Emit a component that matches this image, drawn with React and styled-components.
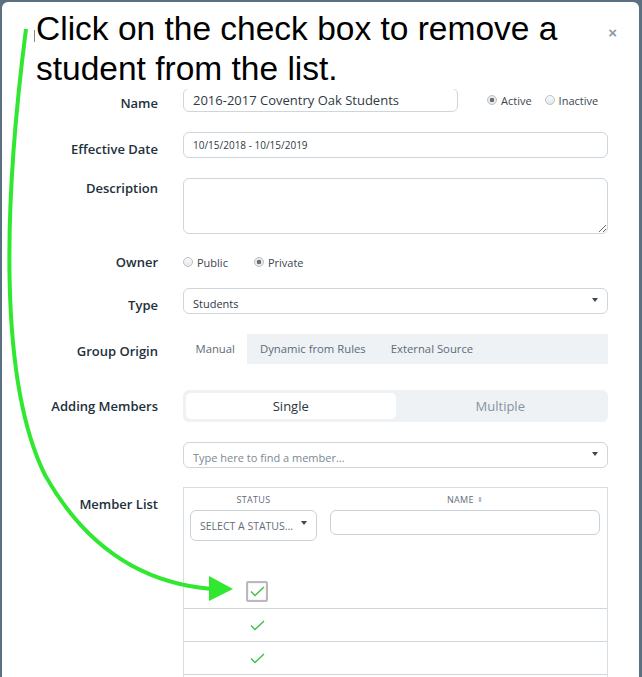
import React from 'react';
import styled, { createGlobalStyle } from 'styled-components';

const GlobalStyle = createGlobalStyle`
    html, body {
        margin: 0;
        padding: 0;
        height: 677px;
        overflow: hidden;
        background: #5b7080;
    }
    * {
        box-sizing: border-box;
    }
`;

const Page = styled.div`
    position: relative;
    width: 642px;
    height: 677px;
    overflow: hidden;
    font-family: "Open Sans", "Noto Sans", sans-serif;
`;

const Modal = styled.div`
    margin: 2px 3px 0 2px;
    height: 700px;
    background: #fff;
    border-radius: 6px 6px 0 0;
`;

const Header = styled.div`
    height: 86px;
    display: flex;
    justify-content: flex-end;
    align-items: flex-start;
    padding: 22px 22px 0 0;
`;

const Close = styled.span`
    font-family: "Liberation Sans", Arial, sans-serif;
    font-size: 15px;
    font-weight: bold;
    line-height: 18px;
    color: #8d9ba6;
`;

const Form = styled.div`
    padding-right: 31px;
`;

const Row = styled.div`
    display: grid;
    grid-template-columns: 156px 1fr;
    column-gap: 25px;
    margin-bottom: ${p => p.$mb ?? 20}px;
`;

const Label = styled.div`
    text-align: right;
    font-size: 13px;
    line-height: 16px;
    font-weight: 600;
    color: #22303c;
    padding-top: ${p => p.$pt ?? 9}px;
`;

const Field = styled.div`
    display: flex;
    align-items: center;
`;

const TextBox = styled.div`
    display: flex;
    align-items: center;
    width: ${p => p.$w || '100%'};
    height: ${p => p.$h || 26}px;
    padding: 0 9px;
    border: 1px solid #cdd6dd;
    border-radius: 6px;
    font-size: ${p => p.$fs || 11}px;
    color: ${p => (p.$muted ? '#7c8893' : '#2f3a44')};
    background: #fff;
`;

const SelectBox = styled(TextBox)`
    justify-content: space-between;
    padding-top: 4px;
`;

const Caret = styled.span`
    width: 0;
    height: 0;
    border-left: 3.5px solid transparent;
    border-right: 3.5px solid transparent;
    border-top: 4px solid #444;
    margin-top: -6px;
`;

const Area = styled.textarea`
    display: block;
    width: 100%;
    height: 56px;
    border: 1px solid #cdd6dd;
    border-radius: 6px;
    resize: vertical;
    font-family: inherit;
`;

const RadioGroup = styled.div`
    display: flex;
    align-items: center;
    gap: ${p => p.$gap || 13}px;
    margin-left: ${p => p.$ml || 0}px;
    height: 16px;
`;

const RadioOption = styled.label`
    display: flex;
    align-items: center;
    gap: 4px;
    font-size: 11px;
    color: #3a4550;
`;

const Radio = styled.span`
    display: inline-block;
    width: 10px;
    height: 10px;
    border-radius: 50%;
    border: 1px solid #b8bfc5;
    background: ${p => (p.$on
        ? 'radial-gradient(circle, #6a6f74 0 2px, #ebedef 2.6px)'
        : 'linear-gradient(#fbfbfb, #e4e7ea)')};
`;

const TabBar = styled.div`
    display: flex;
    height: 30px;
    background: #eef2f5;
`;

const Tab = styled.div`
    display: flex;
    align-items: center;
    padding: 0 12.5px 2px;
    font-size: 11.3px;
    color: #5d6b77;
    background: ${p => (p.$active ? '#fff' : 'transparent')};
`;

const Segmented = styled.div`
    display: grid;
    grid-template-columns: 1fr 1fr;
    height: 32px;
    padding: 3px;
    border-radius: 6px;
    background: #eef2f5;
`;

const Segment = styled.div`
    display: flex;
    align-items: center;
    justify-content: center;
    border-radius: 5px;
    font-size: 13px;
    color: ${p => (p.$active ? '#2a3540' : '#8694a0')};
    background: ${p => (p.$active ? '#fff' : 'transparent')};
`;

const Table = styled.div`
    border: 1px solid #d6dde3;
    border-bottom: none;
    height: 200px;
`;

const TableHead = styled.div`
    display: grid;
    grid-template-columns: 140px 1fr;
    padding-top: 6px;
    padding-bottom: 35px;
`;

const HeadCell = styled.div`
    display: flex;
    flex-direction: column;
    align-items: stretch;
    padding: 0 7px 0 6px;
`;

const HeadTitle = styled.div`
    text-align: center;
    font-size: 9px;
    line-height: 12px;
    letter-spacing: 0.3px;
    color: #5f6d79;
    margin-bottom: 4px;
`;

const Sort = styled.span`
    display: inline-block;
    margin-left: 3px;
    font-size: 7px;
    color: #a9b2ba;
    vertical-align: 1px;
`;

const StatusFilter = styled.div`
    display: flex;
    align-items: center;
    justify-content: space-between;
    height: 31px;
    padding: 0 9px;
    border: 1px solid #c9d2d9;
    border-radius: 6px;
    font-size: 10.5px;
    color: #5f6d79;
`;

const NameFilter = styled.div`
    height: 25px;
    border: 1px solid #c9d2d9;
    border-radius: 6px;
`;

const BodyRow = styled.div`
    display: grid;
    grid-template-columns: 146px 1fr;
    height: 33px;
    border-bottom: 1px solid #cdd6dd;
`;

const StatusCell = styled.div`
    display: flex;
    align-items: center;
    justify-content: center;
`;

const CheckBox = styled.div`
    display: flex;
    align-items: center;
    justify-content: center;
    width: 22px;
    height: 21px;
    margin-top: -1px;
    border: 2px solid #b9b9b9;
    border-radius: 2px;
    box-shadow: inset 0 0 2px rgba(0, 0, 0, 0.15);
`;

const Note = styled.div`
    position: absolute;
    left: 34px;
    top: 9px;
    width: 545px;
    height: 80px;
    padding-left: 2px;
    background: #fff;
    font-family: "Liberation Sans", Arial, sans-serif;
    font-size: 33.5px;
    line-height: 40px;
    color: #000;
    &::before {
        content: "";
        position: absolute;
        left: 0;
        top: 21px;
        width: 1px;
        height: 12px;
        background: #8a8a8a;
    }
`;

const Overlay = styled.svg`
    position: absolute;
    left: 0;
    top: 0;
    pointer-events: none;
`;

const Check = () => (
    <svg width="15" height="11" viewBox="0 0 15 11">
        <path d="M1 5.5 L5 9.5 L14 1" fill="none" stroke="#3cc24a" strokeWidth="1.4" />
    </svg>
);

const App = () => (
    <Page>
        <GlobalStyle />
        <Modal>
            <Header>
                <Close>×</Close>
            </Header>
            <Form>
                <Row>
                    <Label $pt={7}>Name</Label>
                    <Field>
                        <TextBox $w="275px" $h={24} $fs={13}>2016-2017 Coventry Oak Students</TextBox>
                        <RadioGroup $ml={29}>
                            <RadioOption><Radio $on />Active</RadioOption>
                            <RadioOption><Radio />Inactive</RadioOption>
                        </RadioGroup>
                    </Field>
                </Row>
                <Row>
                    <Label>Effective Date</Label>
                    <TextBox $fs={10}>10/15/2018 - 10/15/2019</TextBox>
                </Row>
                <Row>
                    <Label $pt={2}>Description</Label>
                    <Area />
                </Row>
                <Row $mb={18}>
                    <Label $pt={0}>Owner</Label>
                    <RadioGroup $gap={26}>
                        <RadioOption><Radio />Public</RadioOption>
                        <RadioOption><Radio $on />Private</RadioOption>
                    </RadioGroup>
                </Row>
                <Row>
                    <Label>Type</Label>
                    <SelectBox>Students<Caret /></SelectBox>
                </Row>
                <Row $mb={26}>
                    <Label>Group Origin</Label>
                    <TabBar>
                        <Tab $active>Manual</Tab>
                        <Tab>Dynamic from Rules</Tab>
                        <Tab>External Source</Tab>
                    </TabBar>
                </Row>
                <Row>
                    <Label $pt={8}>Adding Members</Label>
                    <Segmented>
                        <Segment $active>Single</Segment>
                        <Segment>Multiple</Segment>
                    </Segmented>
                </Row>
                <Row $mb={19}>
                    <div />
                    <SelectBox $muted>Type here to find a member...<Caret /></SelectBox>
                </Row>
                <Row>
                    <Label>Member List</Label>
                    <Table>
                        <TableHead>
                            <HeadCell>
                                <HeadTitle>STATUS</HeadTitle>
                                <StatusFilter>SELECT A STATUS...<Caret /></StatusFilter>
                            </HeadCell>
                            <HeadCell>
                                <HeadTitle>NAME<Sort>⬍</Sort></HeadTitle>
                                <NameFilter />
                            </HeadCell>
                        </TableHead>
                        <BodyRow>
                            <StatusCell><CheckBox><Check /></CheckBox></StatusCell>
                        </BodyRow>
                        <BodyRow>
                            <StatusCell><Check /></StatusCell>
                        </BodyRow>
                        <BodyRow>
                            <StatusCell><Check /></StatusCell>
                        </BodyRow>
                    </Table>
                </Row>
            </Form>
        </Modal>
        <Note>Click on the check box to remove a student from the list.</Note>
        <Overlay width="642" height="677" viewBox="0 0 642 677">
            <path
                d="M26 29 C4 200, -2 380, 45 475 C90 555, 150 584, 212 589"
                fill="none"
                stroke="#2fe82f"
                strokeWidth="4"
            />
            <polygon points="209,576 233,589 209,601" fill="#2fe82f" />
        </Overlay>
    </Page>
);

export default App;
